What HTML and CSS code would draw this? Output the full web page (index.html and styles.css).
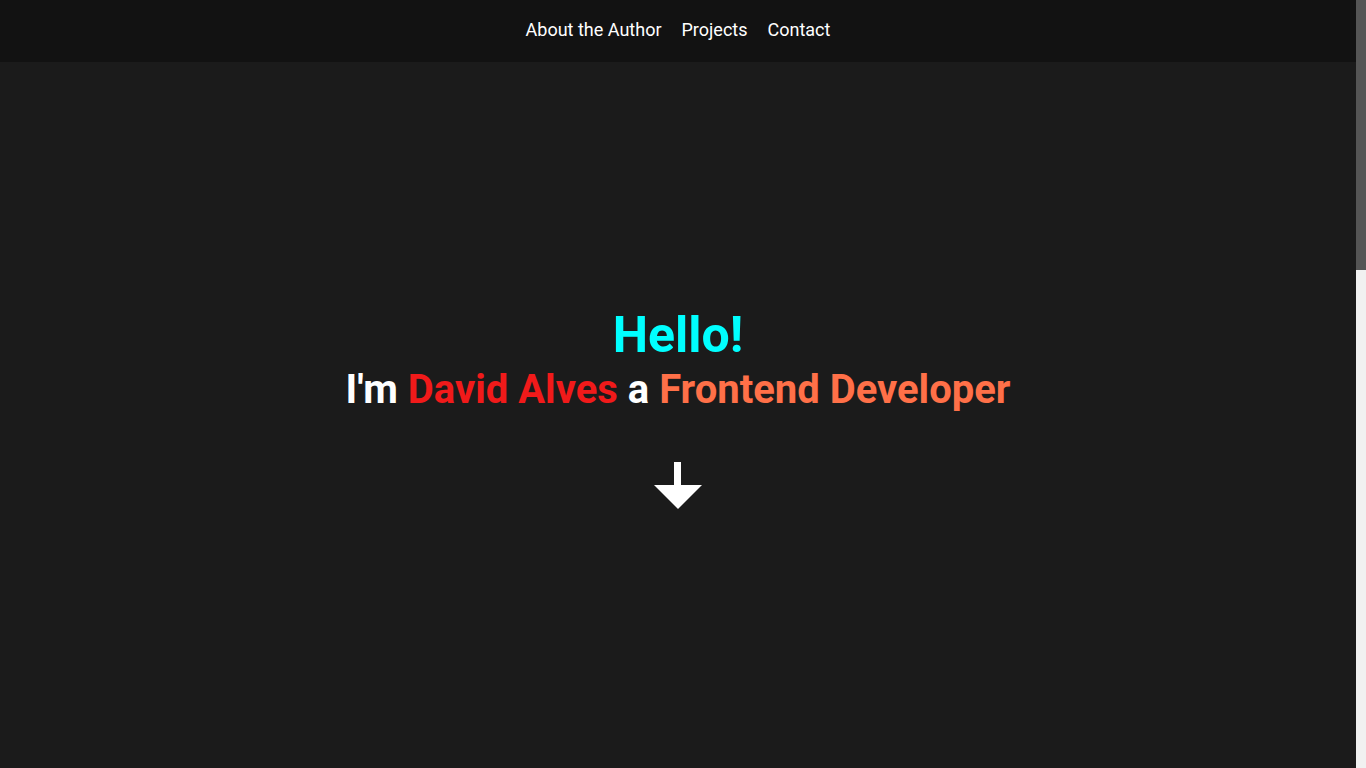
FILE: index.html
```html
<!DOCTYPE html>
<html lang="en">
<head>
<meta charset="utf-8">
<title>David Alves</title>
<link rel="stylesheet" href="styles.css">
</head>
<body>
<div class="page">
  <nav class="topnav">
    <a class="navlink" href="#about">About the Author</a>
    <a class="navlink" href="#projects">Projects</a>
    <a class="navlink" href="#contact">Contact</a>
  </nav>
  <main>
    <section class="hero">
      <h1 class="hello">Hello!</h1>
      <h2 class="intro">I'm <span class="name">David Alves</span> a <span class="role">Frontend Developer</span></h2>
      <a class="down" href="#about" aria-label="Scroll down">
        <svg width="48" height="47" viewBox="0 0 48 47"><rect x="20" y="0" width="7" height="24" fill="#fff"/><polygon points="0,23 48,23 24,47" fill="#fff"/></svg>
      </a>
    </section>
    <section class="about" id="about"></section>
    <section class="projects" id="projects"></section>
  </main>
</div>
<div class="scrollbar" aria-hidden="true"><div class="thumb"></div></div>
</body>
</html>
```
FILE: styles.css
```css
html::-webkit-scrollbar { width: 0; }

body {
  margin: 0;
  display: flex;
  align-items: flex-start;
  background: #1b1b1b;
  font-family: Roboto, "Liberation Sans", sans-serif;
  color: #fff;
}

.page {
  flex: 1;
  min-width: 0;
}

.scrollbar {
  position: sticky;
  top: 0;
  width: 10px;
  height: 100vh;
  flex: none;
  background: #f1f1f1;
}

.thumb {
  height: 270px;
  background: #555;
}

.topnav {
  height: 62px;
  background: #121212;
  display: flex;
  justify-content: center;
  align-items: center;
  gap: 20px;
}

.navlink {
  color: #fff;
  text-decoration: none;
  font-size: 18px;
  padding-bottom: 3px;
}

.hero {
  display: flex;
  flex-direction: column;
  align-items: center;
  padding-top: 244px;
  height: 800px;
  box-sizing: border-box;
}

.hello {
  margin: 0;
  font-size: 50px;
  font-weight: 700;
  color: #00ffff;
  line-height: normal;
}

.intro {
  margin: 2px 0 0;
  font-size: 40px;
  font-weight: 700;
  color: #fff;
  line-height: normal;
}

.name { color: #f11a1a; }
.role { color: #ff7048; }

.down {
  margin-top: 49px;
  display: block;
  line-height: 0;
}

.about { height: 700px; }
.projects { height: 622px; }
```
